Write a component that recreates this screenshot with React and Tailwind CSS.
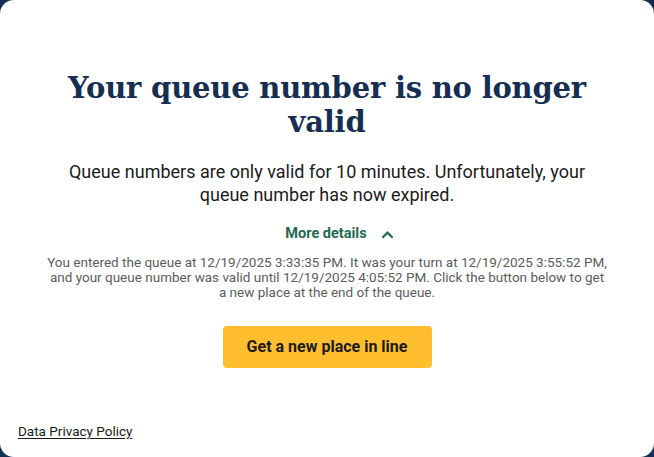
import React from "react";

const ChevronUp = () => (
  <svg width="15" height="15" viewBox="0 0 24 24" fill="none" stroke="currentColor" strokeWidth="3.5" strokeLinecap="square">
    <path d="M5 16l7-7 7 7" />
  </svg>
);

export default function App() {
  const [open, setOpen] = React.useState(true);

  return (
    <div className="h-[457px] w-[654px] bg-[#162e51] overflow-hidden">
      <div className="h-full w-full bg-white rounded-[14px] flex flex-col px-[18px] pt-[71px] pb-[14px] font-['Roboto',sans-serif] text-[#1b1b1b]">
        <div className="flex flex-col items-center text-center">
          <h1 className="font-['DejaVu_Serif',serif] font-bold text-[29px] leading-[34px] text-[#162e51] tracking-[-0.2px] max-w-[560px]">
            Your queue number is no longer valid
          </h1>
          <p className="mt-[21px] text-[18px] leading-[23px] max-w-[530px]">
            Queue numbers are only valid for 10 minutes. Unfortunately, your queue number has now expired.
          </p>
          <button
            onClick={() => setOpen((v) => !v)}
            className="mt-[19px] ml-[26px] flex items-center gap-[13px] text-[#1f6b4e] font-bold text-[14.5px] leading-[18px]"
          >
            More details
            <ChevronUp />
          </button>
          {open && (
            <p className="mt-[12px] text-[13.5px] leading-[15px] text-[#5c5c5c] max-w-[562px]">
              You entered the queue at 12/19/2025 3:33:35 PM. It was your turn at 12/19/2025 3:55:52 PM, and your queue number was valid until 12/19/2025 4:05:52 PM. Click the button below to get a new place at the end of the queue.
            </p>
          )}
          <button className="mt-[26px] h-[42px] w-[209px] rounded-[4px] bg-[#ffbe2e] text-[16px] font-bold text-[#1b1b1b]">
            Get a new place in line
          </button>
        </div>
        <div className="mt-auto">
          <a href="#" className="text-[13.5px] underline underline-offset-2 text-[#1b1b1b]">
            Data Privacy Policy
          </a>
        </div>
      </div>
    </div>
  );
}
